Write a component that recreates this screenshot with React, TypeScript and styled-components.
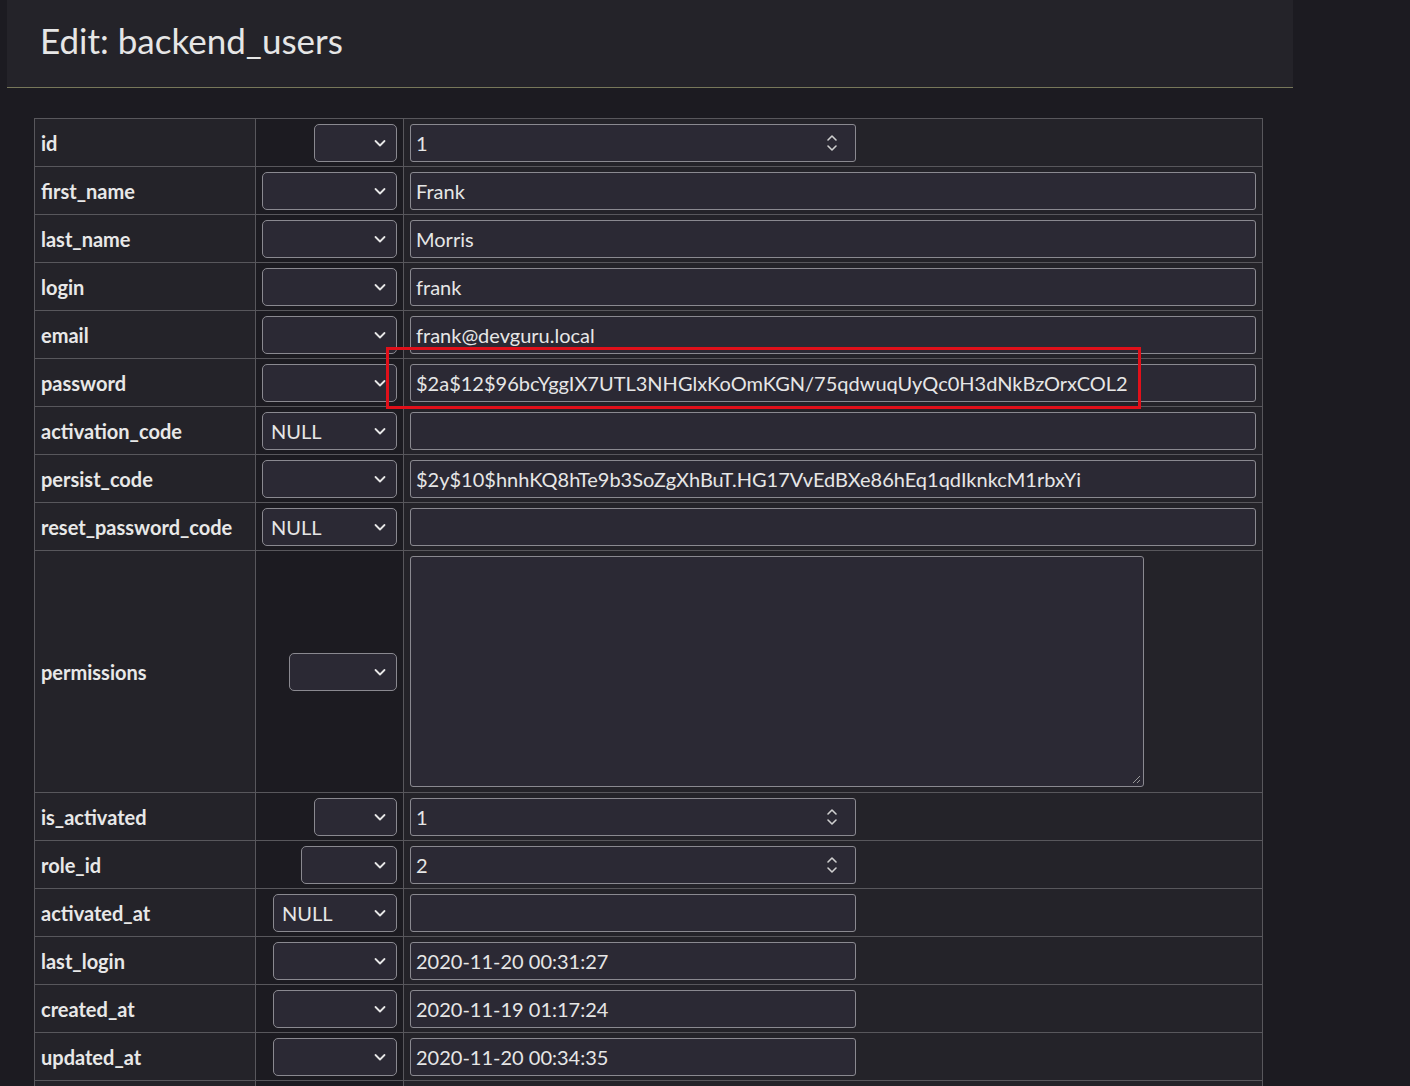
import React from "react";
import styled, { createGlobalStyle } from "styled-components";

const Global = createGlobalStyle`
  html, body { margin: 0; padding: 0; background: #1c1b21; overflow: hidden; }
  body { font-family: "Source Sans Pro", Lato, "Liberation Sans", sans-serif; color: #e6e6e6; }
`;

const Page = styled.div`
  width: 1410px; height: 1086px; overflow: hidden; position: relative;
`;
const Header = styled.div`
  margin-left: 7px; width: 1286px; height: 88px; box-sizing: border-box;
  background: #242329; border-bottom: 1px solid #77775a;
  padding: 19px 0 0 33px;
  font-size: 35px; font-weight: 400; color: #e6e6e6;
`;
const Content = styled.div`
  padding: 30px 0 0 34px;
`;
const Table = styled.table`
  border-collapse: collapse; width: 1229px; table-layout: fixed;
  td { border: 1px solid #58575c; padding: 0; box-sizing: border-box; }
  tr { height: 48px; }
`;
const Label = styled.td`
  background: #242329; padding: 0 0 0 6px !important;
  font-weight: 700; font-size: 20px; color: #e8e8e8; white-space: nowrap;
`;
const SelCell = styled.td`
  background: #1c1b21; text-align: right; padding-right: 6px !important;
`;
const ValCell = styled.td`
  background: #242329; padding: 4px 6px !important;
`;
const Select = styled.div<{ w: number }>`
  display: inline-flex; align-items: center; justify-content: space-between;
  width: ${p => p.w}px; height: 38px; box-sizing: border-box; vertical-align: middle;
  background: #2b2934; border: 1px solid #8a8990; border-radius: 5px;
  padding: 0 9px 0 8px; font-size: 20px; color: #e6e6e6; text-align: left;
`;
const Input = styled.div<{ w?: number }>`
  display: flex; align-items: center; justify-content: space-between;
  width: ${p => (p.w ? p.w + "px" : "100%")}; height: 38px; box-sizing: border-box;
  background: #2b2934; border: 1px solid #8a8990; border-radius: 3px;
  padding: 0 16px 0 5px; font-size: 20px; color: #e6e6e6; white-space: nowrap; overflow: hidden;
`;
const TextArea = styled.div`
  width: 734px; height: 231px; box-sizing: border-box; margin: 1px 0;
  background: #2b2934; border: 1px solid #8a8990; border-radius: 3px; position: relative;
`;
const Grip = styled.svg`position: absolute; right: 2px; bottom: 2px;`;
const Highlight = styled.div`
  position: absolute; left: 386px; top: 347px; width: 755px; height: 62px;
  box-sizing: border-box; border: 3px solid #e0101a; pointer-events: none;
`;

const Chevron = () => (
  <svg width="14" height="14" viewBox="0 0 14 14"><path d="M2.5 5l4.5 4.5 4.5-4.5" fill="none" stroke="#e6e6e6" strokeWidth="1.8" strokeLinecap="round" strokeLinejoin="round" /></svg>
);
const Spin = () => (
  <svg width="14" height="24" viewBox="0 0 14 24"><path d="M3 9l4-4 4 4M3 15l4 4 4-4" fill="none" stroke="#cfcfcf" strokeWidth="1.6" strokeLinecap="round" strokeLinejoin="round" /></svg>
);

type Row = { name: string; sel: number; nul?: boolean; val: string; narrow?: boolean; spin?: boolean; area?: boolean };
const rows: Row[] = [
  { name: "id", sel: 83, val: "1", narrow: true, spin: true },
  { name: "first_name", sel: 135, val: "Frank" },
  { name: "last_name", sel: 135, val: "Morris" },
  { name: "login", sel: 135, val: "frank" },
  { name: "email", sel: 135, val: "frank@devguru.local" },
  { name: "password", sel: 135, val: "$2a$12$96bcYggIX7UTL3NHGlxKoOmKGN/75qdwuqUyQc0H3dNkBzOrxCOL2" },
  { name: "activation_code", sel: 135, nul: true, val: "" },
  { name: "persist_code", sel: 135, val: "$2y$10$hnhKQ8hTe9b3SoZgXhBuT.HG17VvEdBXe86hEq1qdIknkcM1rbxYi" },
  { name: "reset_password_code", sel: 135, nul: true, val: "" },
  { name: "permissions", sel: 108, val: "", area: true },
  { name: "is_activated", sel: 83, val: "1", narrow: true, spin: true },
  { name: "role_id", sel: 96, val: "2", narrow: true, spin: true },
  { name: "activated_at", sel: 124, nul: true, val: "", narrow: true },
  { name: "last_login", sel: 124, val: "2020-11-20 00:31:27", narrow: true },
  { name: "created_at", sel: 124, val: "2020-11-19 01:17:24", narrow: true },
  { name: "updated_at", sel: 124, val: "2020-11-20 00:34:35", narrow: true },
];

export default function App() {
  return (
    <Page>
      <Global />
      <Header>Edit: backend_users</Header>
      <Content>
        <Table>
          <colgroup>
            <col style={{ width: 221 }} />
            <col style={{ width: 148 }} />
            <col />
          </colgroup>
          <tbody>
            {rows.map(r => (
              <tr key={r.name}>
                <Label>{r.name}</Label>
                <SelCell>
                  <Select w={r.sel}><span>{r.nul ? "NULL" : ""}</span><Chevron /></Select>
                </SelCell>
                <ValCell>
                  {r.area ? (
                    <TextArea>
                      <Grip width="10" height="10" viewBox="0 0 10 10"><path d="M9 2L2 9M9 6L6 9" stroke="#999" strokeWidth="1" /></Grip>
                    </TextArea>
                  ) : (
                    <Input w={r.narrow ? 446 : undefined}><span>{r.val}</span>{r.spin && <Spin />}</Input>
                  )}
                </ValCell>
              </tr>
            ))}
            <tr>
              <Label />
              <SelCell><Select w={124}><span /><Chevron /></Select></SelCell>
              <ValCell><Input w={446} /></ValCell>
            </tr>
          </tbody>
        </Table>
      </Content>
      <Highlight />
    </Page>
  );
}
